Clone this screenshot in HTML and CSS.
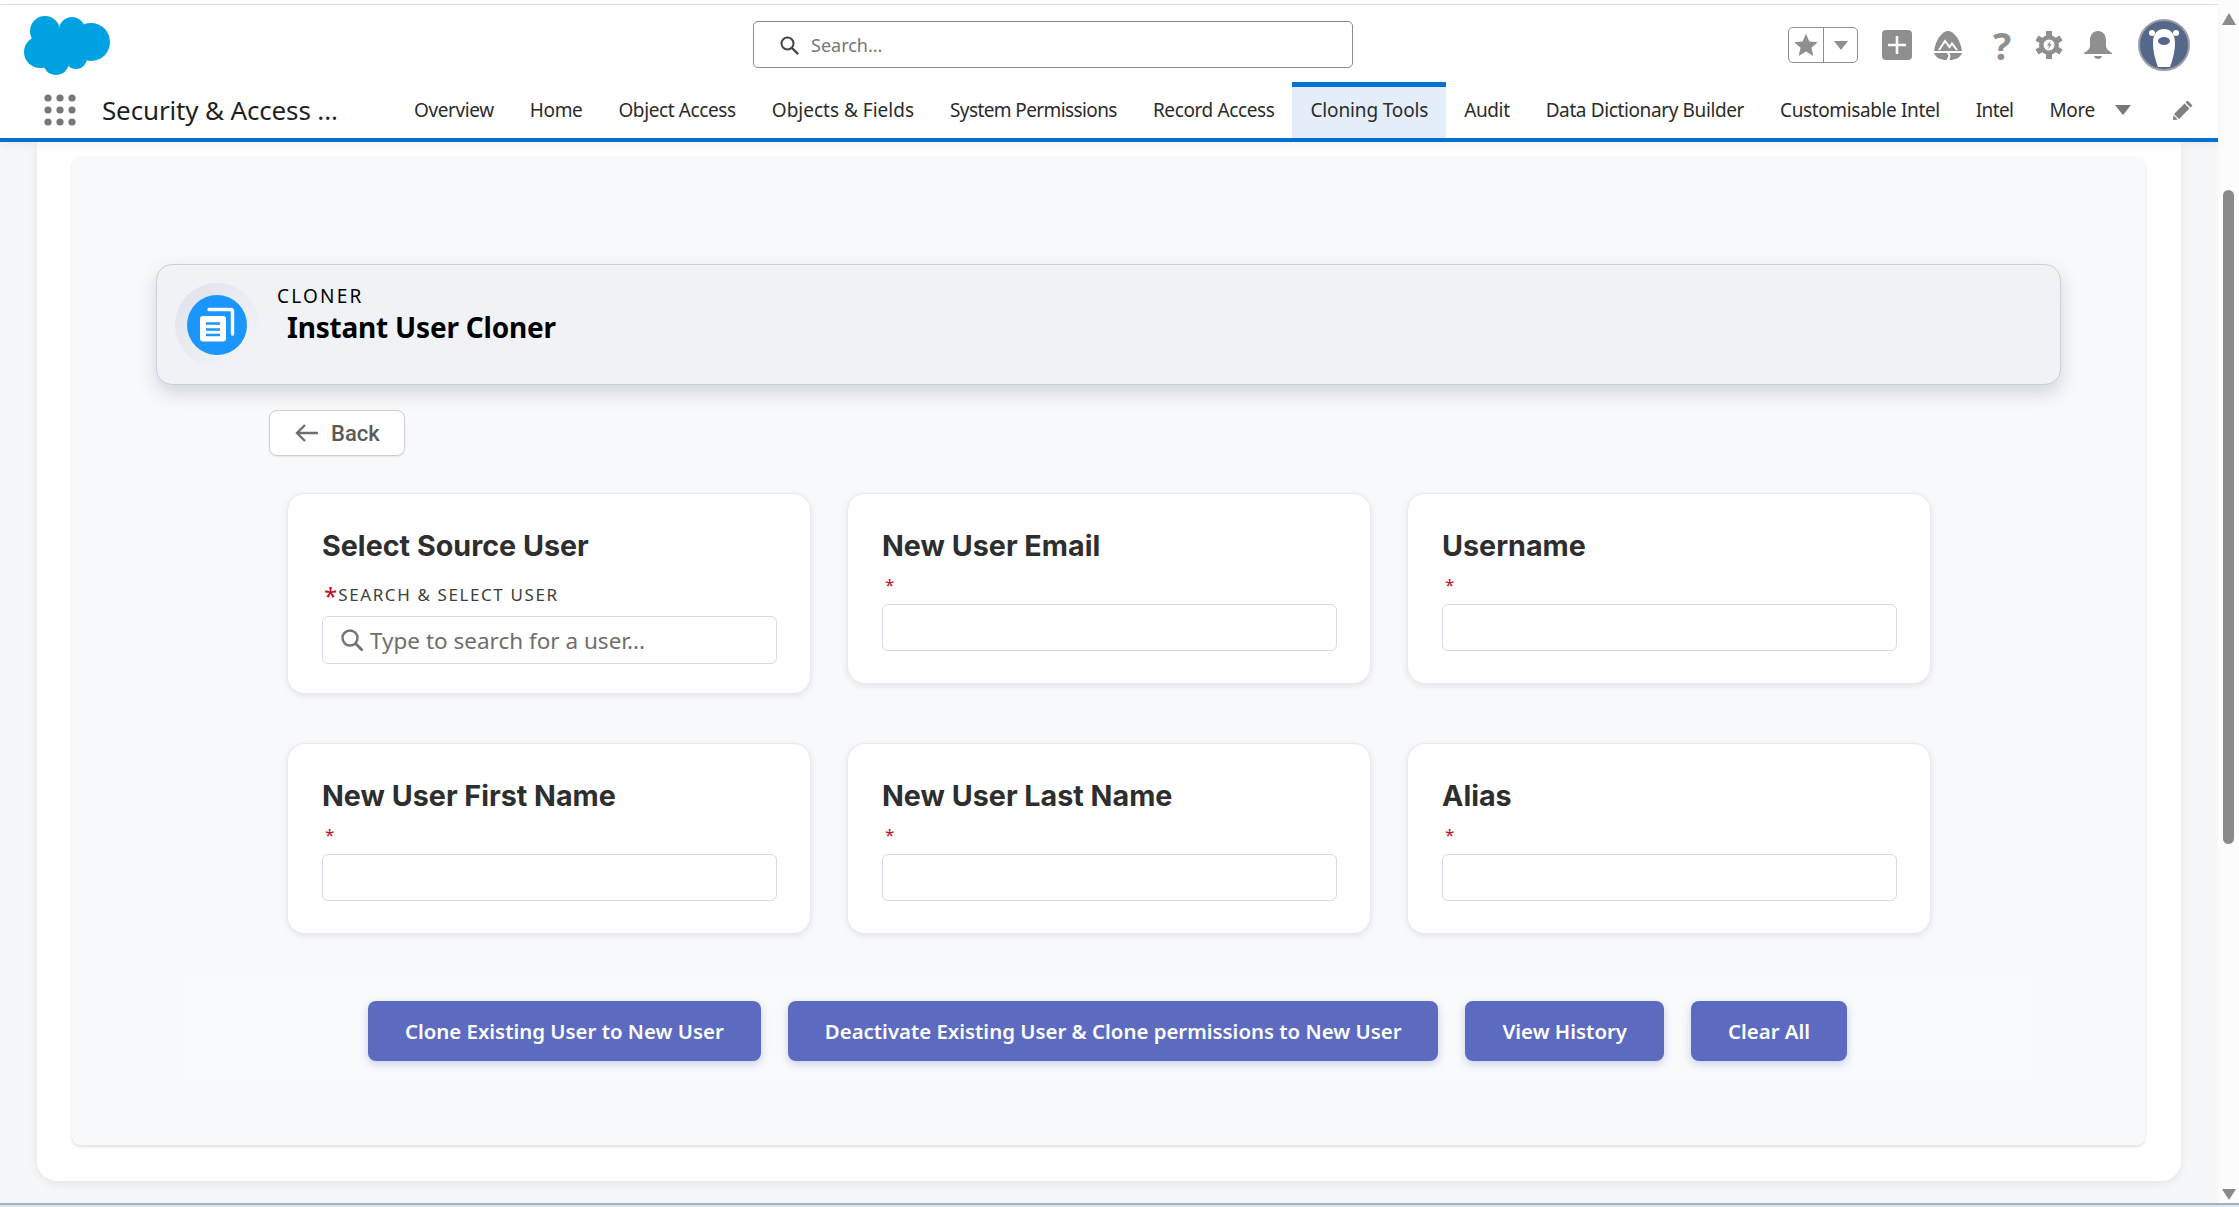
FILE: index.html
```html
<!DOCTYPE html>
<html>
<head>
	<title>Instant User Cloner</title>
	<link rel="stylesheet" href="styles.css">
</head>
<body>
	<div class="frame">
		<div class="app">
			<div class="topline"></div>
			<header class="header">
				<div class="headerTop">
					<div class="logoCell">
						<svg class="logo" viewBox="0 0 86 60" width="86" height="60">
							<g fill="#00a1e0">
								<circle cx="21" cy="16" r="15"/>
								<circle cx="48" cy="15" r="13"/>
								<circle cx="67" cy="27" r="19"/>
								<circle cx="16" cy="37" r="16"/>
								<circle cx="32" cy="47" r="13"/>
								<circle cx="52" cy="43" r="11"/>
								<rect x="18" y="16" width="40" height="28"/>
							</g>
						</svg>
					</div>
					<div class="globalSearch">
						<svg class="searchIcon" viewBox="0 0 20 20" width="20" height="20">
							<circle cx="8.5" cy="8.5" r="6" fill="none" stroke="#444" stroke-width="2"/>
							<path d="M13 13l5.5 5.5" stroke="#444" stroke-width="2.4" stroke-linecap="round"/>
						</svg>
						<span>Search...</span>
					</div>
					<div class="headerIcons">
						<div class="favGroup">
							<span class="favStar">
								<svg viewBox="0 0 24 24" width="26" height="26"><path fill="#8f8f8f" d="M12 1.5l3.1 7.2 7.7.7-5.8 5.1 1.8 7.6L12 18.1l-6.8 4 1.8-7.6L1.200 9.400l7.700-.7z"/></svg>
							</span>
							<span class="favCaret"><i class="caret"></i></span>
						</div>
						<span class="plusTile">
							<svg viewBox="0 0 30 30" width="30" height="30"><rect width="30" height="30" rx="4" fill="#8f8f8f"/><path d="M15 6v18M6 15h18" stroke="#fff" stroke-width="2.600"/></svg>
						</span>
						<svg class="trailIcon" viewBox="0 0 28 29" width="28" height="29">
							<path fill="#8f8f8f" d="M14 0c3 0 5 2 7 4 4 4 6 10 7 16H0C1 14 3 8 7 4c2-2 4-4 7-4z"/>
							<path fill="none" stroke="#fff" stroke-width="2" d="M5 19l6-9 4.500 6 2.500-3.500 5 6.500"/>
							<path fill="#8f8f8f" d="M0 22h13l1.500 3-2 4C7 29 2 27 0 22zM15.500 22H28c-2 5-7 7-12.500 7l1-4z"/>
						</svg>
						<span class="helpMark">?</span>
						<svg class="gearIcon" viewBox="0 0 28 28" width="28" height="28">
							<circle cx="14" cy="14" r="10" fill="#8f8f8f"/>
							<path stroke="#8f8f8f" stroke-width="6" d="M14 0v5M14 23v5M2 7l4 2.500M22 18.500l4 2.500M2 21l4-2.500M22 9.500L26 7"/>
							<circle cx="14" cy="14" r="5.500" fill="#fff"/>
							<path fill="#8f8f8f" d="M15.500 9.500l-3.500 5h2l-1 4 3.500-5.500h-2z"/>
						</svg>
						<svg class="bellIcon" viewBox="0 0 28 28" width="28" height="28">
							<path fill="#8f8f8f" d="M14 0c5 0 8 4 8 9v6c0 3 3 5 6 7v1H0v-1c3-2 6-4 6-7V9c0-5 3-9 8-9z"/>
							<path fill="#8f8f8f" d="M10 25h8c-.5 2-2 3-4 3s-3.500-1-4-3z"/>
						</svg>
						<svg class="avatar" viewBox="0 0 52 52" width="52" height="52">
							<circle cx="26" cy="26" r="25" fill="#56688a" stroke="#9a9ea6" stroke-width="2"/>
							<circle cx="14" cy="14" r="3" fill="#fff"/>
							<circle cx="38" cy="14" r="3" fill="#fff"/>
							<path fill="#fff" d="M26 10c7 0 11 5 11 14 0 10-3 18-5 24H20c-2-6-5-14-5-24 0-9 4-14 11-14z"/>
							<ellipse cx="26" cy="22" rx="6" ry="4" fill="#56688a"/>
						</svg>
					</div>
				</div>
				<nav class="navRow">
					<div class="appLauncher">
						<svg viewBox="0 0 32 32" width="32" height="32">
							<g fill="#777">
								<circle cx="4" cy="4" r="3.600"/><circle cx="16" cy="4" r="3.600"/><circle cx="28" cy="4" r="3.600"/>
								<circle cx="4" cy="16" r="3.600"/><circle cx="16" cy="16" r="3.600"/><circle cx="28" cy="16" r="3.600"/>
								<circle cx="4" cy="28" r="3.600"/><circle cx="16" cy="28" r="3.600"/><circle cx="28" cy="28" r="3.600"/>
							</g>
						</svg>
						<span class="appName">Security &amp; Access ...</span>
					</div>
					<div class="tabs">
						<a class="tab">Overview</a>
						<a class="tab">Home</a>
						<a class="tab">Object Access</a>
						<a class="tab tabWide">Objects &amp; Fields</a>
						<a class="tab tabNarrow">System Permissions</a>
						<a class="tab">Record Access</a>
						<a class="tab active">Cloning Tools</a>
						<a class="tab">Audit</a>
						<a class="tab">Data Dictionary Builder</a>
						<a class="tab">Customisable Intel</a>
						<a class="tab tabNarrow">Intel</a>
						<a class="tab more">More <i class="caret moreCaret"></i></a>
					</div>
					<svg class="pencil" viewBox="0 0 20 20" width="20" height="20">
						<path fill="#808080" d="M14.500.5l5 5-2 2-5-5zM11.500 3.500l5 5L6 19l-5-5zM.5 15.200l4.300 4.300-4.800.5z"/>
					</svg>
				</nav>
			</header>

			<main class="workspace">
				<div class="outerCard">
					<div class="panel">
						<div class="pageHeader">
							<div class="iconRing">
								<span class="iconCircle">
									<svg viewBox="0 0 60 60" width="60" height="60">
										<path d="M22 14.500h21.500a2 2 0 0 1 2 2V39" fill="none" stroke="#fff" stroke-width="3.400" stroke-linecap="round"/>
										<rect x="13" y="21" width="26" height="25.500" rx="3" fill="#fff"/>
										<path d="M19 28.500h14M19 34.500h14M19 40h14" stroke="#1b96ff" stroke-width="2.400"/>
									</svg>
								</span>
							</div>
							<div class="headerText">
								<div class="eyebrow">CLONER</div>
								<h1 class="pageTitle">Instant User Cloner</h1>
							</div>
						</div>

						<button class="backBtn">
							<svg viewBox="0 0 24 20" width="24" height="20">
								<path d="M23 10H3M10 2l-8 8 8 8" fill="none" stroke="#6f6f6f" stroke-width="2.400"/>
							</svg>
							Back
						</button>

						<div class="fieldGrid">
							<div class="fieldCard">
								<h2 class="fieldTitle">Select Source User</h2>
								<div class="searchLabel"><span class="star">*</span>SEARCH &amp; SELECT USER</div>
								<div class="textBox userSearch">
									<svg viewBox="0 0 24 24" width="24" height="24">
										<circle cx="10" cy="10" r="7.500" fill="none" stroke="#747474" stroke-width="2.400"/>
										<path d="M15.500 15.500l7 7" stroke="#747474" stroke-width="2.800"/>
									</svg>
									<span>Type to search for a user...</span>
								</div>
							</div>
							<div class="fieldCard">
								<h2 class="fieldTitle">New User Email</h2>
								<div class="reqMark">*</div>
								<div class="textBox"></div>
							</div>
							<div class="fieldCard">
								<h2 class="fieldTitle">Username</h2>
								<div class="reqMark">*</div>
								<div class="textBox"></div>
							</div>
							<div class="fieldCard">
								<h2 class="fieldTitle">New User First Name</h2>
								<div class="reqMark">*</div>
								<div class="textBox"></div>
							</div>
							<div class="fieldCard">
								<h2 class="fieldTitle">New User Last Name</h2>
								<div class="reqMark">*</div>
								<div class="textBox"></div>
							</div>
							<div class="fieldCard">
								<h2 class="fieldTitle">Alias</h2>
								<div class="reqMark">*</div>
								<div class="textBox"></div>
							</div>
						</div>

						<div class="actions">
							<button class="actionBtn">Clone Existing User to New User</button>
							<button class="actionBtn">Deactivate Existing User &amp; Clone permissions to New User</button>
							<button class="actionBtn">View History</button>
							<button class="actionBtn">Clear All</button>
						</div>
					</div>
				</div>
			</main>
		</div>

		<div class="scrollbar">
			<i class="arrowUp"></i>
			<div class="thumb"></div>
			<i class="arrowDown"></i>
		</div>
	</div>
	<div class="statusLine"></div>
</body>
</html>
```

FILE: styles.css
```css
:root {
	--blue: #0070d2;
	--grayIcon: #8f8f8f;
	--pageBack: #f6f7f9;
	--panelBack: #f8f9fb;
	--btnColor: #5c6bc0;
	--navText: #2b2b2b;
}

html, body {
	margin: 0;
	padding: 0;
	height: 1207px;
	overflow: hidden;
	background-color: #fff;
	font-family: "Noto Sans", "Open Sans", sans-serif;
}

.frame {
	display: flex;
	height: 1203px;
}

.app {
	width: 2218px;
	display: flex;
	flex-direction: column;
}

.topline {
	height: 5px;
	flex: none;
	background-color: #fff;
	border-bottom: 1px solid #e2e2e2;
	box-sizing: border-box;
}

/* header */
.header {
	flex: none;
	position: relative;
	z-index: 2;
	height: 137px;
	box-sizing: border-box;
	background-color: #fff;
	border-bottom: 4px solid var(--blue);
	box-shadow: 0 4px 8px rgba(0, 0, 0, 0.05);
}

.headerTop {
	display: grid;
	grid-template-columns: 753px 600px 1fr;
	height: 77px;
}

.logoCell {
	padding: 10px 0 0 24px;
}

.globalSearch {
	display: flex;
	align-items: center;
	gap: 12px;
	box-sizing: border-box;
	height: 47px;
	margin-top: 16px;
	padding-left: 25px;
	border: 1px solid #8a8a8a;
	border-radius: 5px;
	font-size: 18px;
	color: #777;
}

.headerIcons {
	display: flex;
	align-items: center;
	justify-content: flex-end;
	padding-right: 28px;
	padding-top: 3px;
}

.favGroup {
	display: flex;
	width: 70px;
	height: 36px;
	box-sizing: border-box;
	border: 1px solid var(--grayIcon);
	border-radius: 5px;
}

.favStar {
	display: flex;
	align-items: center;
	justify-content: center;
	width: 34px;
	border-right: 1px solid var(--grayIcon);
}

.favCaret {
	display: flex;
	flex: 1;
	align-items: center;
	justify-content: center;
}

.caret {
	display: inline-block;
	width: 0;
	height: 0;
	border-left: 7px solid transparent;
	border-right: 7px solid transparent;
	border-top: 9px solid var(--grayIcon);
}

.plusTile {
	display: flex;
	margin-left: 24px;
}

.trailIcon {
	margin-left: 22px;
}

.helpMark {
	width: 20px;
	margin-left: 30px;
	font-size: 38px;
	font-weight: 700;
	line-height: 36px;
	text-align: center;
	color: var(--grayIcon);
}

.gearIcon {
	margin-left: 23px;
}

.bellIcon {
	margin-left: 21px;
}

.avatar {
	margin-left: 26px;
}

.navRow {
	display: flex;
	align-items: stretch;
	height: 56px;
}

.appLauncher {
	display: flex;
	align-items: center;
	gap: 26px;
	flex: none;
	width: 352px;
	padding-left: 44px;
	box-sizing: content-box;
}

.appName {
	font-size: 26px;
	letter-spacing: -0.15px;
	white-space: nowrap;
	color: #1f1f1f;
}

.tabs {
	display: flex;
	align-items: stretch;
	flex: none;
}

.tab {
	display: flex;
	align-items: center;
	padding: 0 18px;
	font-size: 19px;
	letter-spacing: -0.38px;
	white-space: nowrap;
	color: var(--navText);
}

.tab.tabWide {
	letter-spacing: 0;
}

.tab.tabNarrow {
	letter-spacing: -0.6px;
}

.tab.active {
	letter-spacing: -0.15px;
	background-color: #e4eefa;
	box-shadow: inset 0 5px 0 var(--blue);
}

.moreCaret {
	margin-left: 20px;
	border-left-width: 8px;
	border-right-width: 8px;
	border-top: 10px solid #777;
}

.pencil {
	align-self: center;
	margin-left: 24px;
}

/* content */
.workspace {
	flex: 1;
	display: flex;
	min-height: 0;
	padding: 0 37px 22px 37px;
	background-color: var(--pageBack);
}

.outerCard {
	flex: 1;
	padding: 14px 36px 36px 35px;
	background-color: #fff;
	border-radius: 0 0 20px 20px;
	box-shadow: 0 3px 10px rgba(0, 0, 0, 0.08);
}

.panel {
	height: 100%;
	box-sizing: border-box;
	padding-top: 108px;
	background-color: var(--panelBack);
	border-radius: 8px;
	box-shadow: 0 2px 3px rgba(0, 0, 0, 0.12);
}

.pageHeader {
	display: flex;
	align-items: flex-start;
	box-sizing: border-box;
	height: 121px;
	margin: 0 84px;
	padding: 18px 0 0 18px;
	background-color: #f1f2f6;
	border: 1px solid #cfcfd3;
	border-radius: 16px;
	box-shadow: 0 8px 18px rgba(70, 85, 130, 0.22);
}

.iconRing {
	display: flex;
	align-items: center;
	justify-content: center;
	flex: none;
	width: 84px;
	height: 84px;
	border-radius: 50%;
	background: linear-gradient(135deg, #dfe2ec, #f5f6f9);
}

.iconCircle {
	display: flex;
	width: 60px;
	height: 60px;
	border-radius: 50%;
	background-color: #1b96ff;
}

.headerText {
	margin-left: 18px;
	color: #000;
}

.eyebrow {
	font-size: 19px;
	line-height: 26px;
	letter-spacing: 2.2px;
}

.pageTitle {
	margin: -1px 0 0 10px;
	font-size: 28px;
	line-height: 38px;
	font-weight: 700;
	letter-spacing: -0.2px;
}

.backBtn {
	display: flex;
	align-items: center;
	gap: 12px;
	box-sizing: border-box;
	width: 136px;
	height: 46px;
	margin: 25px 0 0 197px;
	padding: 0 0 0 25px;
	background-color: #fff;
	border: 1px solid #cfcfd3;
	border-radius: 8px;
	font-family: Roboto, sans-serif;
	font-size: 22px;
	font-weight: 500;
	color: #5a5a5a;
	box-shadow: 0 1px 2px rgba(0, 0, 0, 0.08);
}

.fieldGrid {
	display: grid;
	grid-template-columns: repeat(3, 524px);
	grid-template-rows: 201px 191px;
	column-gap: 36px;
	row-gap: 49px;
	align-items: start;
	margin: 37px 0 0 215px;
}

.fieldCard {
	box-sizing: border-box;
	padding: 32px 33px 0 34px;
	height: 191px;
	background-color: #fff;
	border: 1px solid #e8e9ef;
	border-radius: 18px;
	box-shadow: 0 2px 6px rgba(40, 50, 80, 0.1);
}

.fieldCard:first-child {
	height: 201px;
}

.fieldTitle {
	margin: 0;
	font-family: Inter, sans-serif;
	font-size: 28.7px;
	line-height: 40px;
	font-weight: 700;
	color: #2e2e2e;
}

.searchLabel {
	display: flex;
	align-items: center;
	height: 30px;
	margin: 13px 0 7px 0;
	padding-left: 2px;
	font-size: 17px;
	letter-spacing: 1.6px;
	color: #3e3e3c;
}

.star {
	font-size: 24px;
	line-height: 24px;
	height: 20px;
	letter-spacing: 0;
	margin-right: 1px;
	color: #c20d1f;
}

.reqMark {
	height: 30px;
	margin: 4px 0 4px 0;
	padding-left: 3px;
	font-size: 17px;
	line-height: 30px;
	color: #c20d1f;
}

.textBox {
	box-sizing: border-box;
	width: 455px;
	height: 47px;
	background-color: #fff;
	border: 1px solid #d8dae3;
	border-radius: 6px;
}

.userSearch {
	display: flex;
	align-items: center;
	gap: 6px;
	height: 48px;
	padding-left: 17px;
	font-size: 22.5px;
	color: #706e6b;
}

.actions {
	display: flex;
	justify-content: center;
	gap: 27px;
	box-sizing: border-box;
	height: 107px;
	margin: 43px 108px 0 106px;
	padding-top: 24px;
	background-color: #f9fafc;
	border-radius: 8px;
}

.actionBtn {
	height: 60px;
	padding: 0 37px;
	background-color: var(--btnColor);
	border: none;
	border-radius: 8px;
	font-family: "Noto Sans", sans-serif;
	font-size: 20.4px;
	font-weight: 600;
	color: #fff;
	box-shadow: 0 3px 8px rgba(92, 107, 192, 0.3);
}

/* fake scrollbar on the side */
.scrollbar {
	display: flex;
	flex-direction: column;
	align-items: center;
	width: 21px;
	background-color: #fcfcfc;
}

.arrowUp {
	width: 0;
	height: 0;
	margin-top: 13px;
	border-left: 7px solid transparent;
	border-right: 7px solid transparent;
	border-bottom: 12px solid #8a8a8a;
}

.thumb {
	width: 11px;
	height: 654px;
	margin-top: 165px;
	background-color: #8a8a8a;
	border-radius: 6px;
}

.arrowDown {
	width: 0;
	height: 0;
	margin-top: 345px;
	border-left: 7px solid transparent;
	border-right: 7px solid transparent;
	border-top: 11px solid #8a8a8a;
}

.statusLine {
	height: 4px;
	background: linear-gradient(#a8b2bf 50%, #dbe6ef 50%);
}
```
